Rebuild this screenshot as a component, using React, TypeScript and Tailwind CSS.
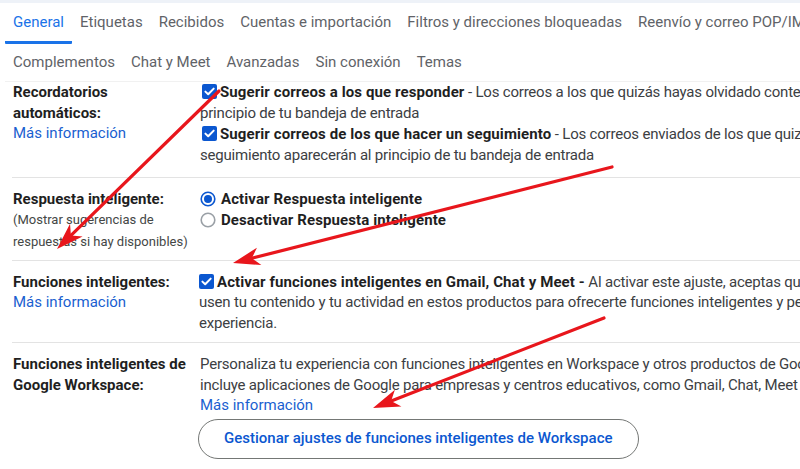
import React from "react";

const BLUE = "#0b57d0";

const tabsTop = [
  "General",
  "Etiquetas",
  "Recibidos",
  "Cuentas e importación",
  "Filtros y direcciones bloqueadas",
  "Reenvío y correo POP/IMAP",
];

const tabsBottom = ["Complementos", "Chat y Meet", "Avanzadas", "Sin conexión", "Temas"];

// Blue checked checkbox
const Check = ({ className = "" }: { className?: string }) => (
  <svg
    width="15"
    height="15"
    viewBox="0 0 15 15"
    className={`inline-block align-[-2px] ${className}`}
  >
    <rect x="0" y="0" width="15" height="15" rx="2" fill={BLUE} />
    <path
      d="M3.4 7.6 L6.2 10.3 L11.7 4.6"
      fill="none"
      stroke="white"
      strokeWidth="2"
      strokeLinecap="round"
      strokeLinejoin="round"
    />
  </svg>
);

const Radio = ({ checked }: { checked?: boolean }) => (
  <svg width="16" height="16" viewBox="0 0 16 16" className="shrink-0">
    <circle
      cx="8"
      cy="8"
      r="6.8"
      fill="white"
      stroke={checked ? BLUE : "#9aa0a6"}
      strokeWidth="1.6"
    />
    {checked && <circle cx="8" cy="8" r="4" fill={BLUE} />}
  </svg>
);

// Red annotation arrow, from (x1,y1) to the tip (x2,y2)
const Arrow = ({ x1, y1, x2, y2 }: { x1: number; y1: number; x2: number; y2: number }) => {
  const dx = x2 - x1;
  const dy = y2 - y1;
  const len = Math.hypot(dx, dy);
  const ux = dx / len;
  const uy = dy / len;
  const nx = -uy;
  const ny = ux;
  const L = 27;
  const W = 9;
  const bx = x2 - ux * L;
  const by = y2 - uy * L;
  const kx = x2 - ux * L * 0.72;
  const ky = y2 - uy * L * 0.72;
  const pts = [
    [x2, y2],
    [bx + nx * W, by + ny * W],
    [kx, ky],
    [bx - nx * W, by - ny * W],
  ]
    .map((p) => p.join(","))
    .join(" ");
  return (
    <g>
      <line x1={x1} y1={y1} x2={kx + ux * 2} y2={ky + uy * 2} stroke="#e8161c" strokeWidth="3.2" strokeLinecap="round" />
      <polygon points={pts} fill="#e8161c" />
    </g>
  );
};

const Row = ({
  label,
  children,
  className = "",
  last = false,
}: {
  label: React.ReactNode;
  children: React.ReactNode;
  className?: string;
  last?: boolean;
}) => (
  <div className={`flex ml-[12px] ${last ? "" : "border-b border-[#e3e3e3]"} ${className}`}>
    <div className="w-[188px] shrink-0 pl-[1px]">{label}</div>
    <div className="flex-1 whitespace-nowrap tracking-[-0.2px]">{children}</div>
  </div>
);

const MoreInfo = () => (
  <a className="text-[#1a5fd0] cursor-pointer tracking-normal">Más información</a>
);

const B = ({ children }: { children: React.ReactNode }) => (
  <b className="text-[#1f1f1f] tracking-[0.1px]">{children}</b>
);

export default function App() {
  return (
    <div
      className="relative w-[800px] h-[469px] overflow-hidden bg-white text-[15px] leading-[20.5px] text-[#3c4043]"
      style={{ fontFamily: "Roboto, 'Liberation Sans', sans-serif" }}
    >
      <div className="h-[3px] bg-[#eef2f8]" />

      {/* Tabs */}
      <div className="flex h-[41px] ml-[5px] whitespace-nowrap text-[#5f6368]">
        {tabsTop.map((t, i) => (
          <div
            key={t}
            className={`px-2 flex items-center ${
              i === 0 ? "border-b-[3px] border-[#1a73e8] text-[#1a73e8] rounded-b-[1px]" : "border-b-[3px] border-transparent"
            }`}
          >
            {t}
          </div>
        ))}
      </div>
      <div className="flex h-[38px] ml-[5px] whitespace-nowrap text-[#5f6368] border-b border-[#f1f1f1]">
        {tabsBottom.map((t) => (
          <div key={t} className="px-2 flex items-center">
            {t}
          </div>
        ))}
      </div>

      {/* Recordatorios automáticos */}
      <Row
        className="pb-[12px]"
        label={
          <div className="font-bold text-[#1f1f1f]">
            Recordatorios
            <br />
            automáticos:
            <div className="font-normal">
              <MoreInfo />
            </div>
          </div>
        }
      >
        <div>
          <Check className="ml-[2px] mr-[3px]" />
          <B>Sugerir correos a los que responder</B> - Los correos a los que quizás hayas olvidado contestar
          aparecerán al
          <br />
          principio de tu bandeja de entrada
        </div>
        <div className="mt-[1px]">
          <Check className="ml-[2px] mr-[3px]" />
          <B>Sugerir correos de los que hacer un seguimiento</B> - Los correos enviados de los que quizás debas hacer
          un
          <br />
          seguimiento aparecerán al principio de tu bandeja de entrada
        </div>
      </Row>

      {/* Respuesta inteligente */}
      <Row
        className="pt-[11px] pb-[7px]"
        label={
          <div>
            <div className="font-bold text-[#1f1f1f]">Respuesta inteligente:</div>
            <div className="text-[13px] leading-[22px] text-[#444746] -mt-[1px]">
              (Mostrar sugerencias de
              <br />
              respuestas si hay disponibles)
            </div>
          </div>
        }
      >
        <div className="flex items-center gap-[5px]">
          <Radio checked />
          <B>Activar Respuesta inteligente</B>
        </div>
        <div className="flex items-center gap-[5px]">
          <Radio />
          <B>Desactivar Respuesta inteligente</B>
        </div>
      </Row>

      {/* Funciones inteligentes */}
      <Row
        className="pt-[11px] pb-[9px]"
        label={
          <div>
            <div className="font-bold text-[#1f1f1f]">Funciones inteligentes:</div>
            <MoreInfo />
          </div>
        }
      >
        <div className="-ml-[1px]">
          <Check className="mr-[3px]" />
          <B>Activar funciones inteligentes en Gmail, Chat y Meet -</B> Al activar este ajuste, aceptas que Gmail,
          Chat y Meet
          <br />
          usen tu contenido y tu actividad en estos productos para ofrecerte funciones inteligentes y personalizar tu
          <br />
          experiencia.
        </div>
      </Row>

      {/* Funciones inteligentes de Google Workspace */}
      <Row
        last
        className="pt-[11px]"
        label={
          <div className="font-bold text-[#1f1f1f]">
            Funciones inteligentes de
            <br />
            Google Workspace:
          </div>
        }
      >
        <div>
          Personaliza tu experiencia con funciones inteligentes en Workspace y otros productos de Google. Workspace
          <br />
          incluye aplicaciones de Google para empresas y centros educativos, como Gmail, Chat, Meet y Drive.
          <br />
          <MoreInfo />
        </div>
        <button className="mt-[3px] -ml-[2px] h-[40px] px-[25px] rounded-full border border-[#747775] text-[#0b57d0] font-medium tracking-normal">
          Gestionar ajustes de funciones inteligentes de Workspace
        </button>
      </Row>

      {/* Annotation arrows */}
      <svg className="absolute inset-0 pointer-events-none" width="800" height="469" viewBox="0 0 800 469">
        <Arrow x1={219} y1={91} x2={57} y2={249} />
        <Arrow x1={612} y1={167} x2={233} y2={263} />
        <Arrow x1={604} y1={318} x2={373} y2={408} />
      </svg>
    </div>
  );
}
